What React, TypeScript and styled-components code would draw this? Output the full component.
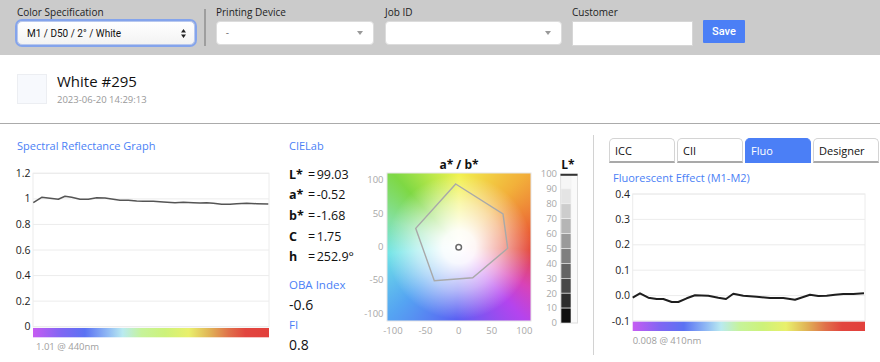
import styled, { createGlobalStyle } from 'styled-components'

const BLUE = '#4b7ff6'

const GlobalStyle = createGlobalStyle`
  html, body { margin: 0; padding: 0; background: #fff; }
  body { font-family: 'Open Sans', 'DejaVu Sans', sans-serif; color: #222; }
  * { box-sizing: border-box; }
`

const Page = styled.div`
  width: 880px;
  height: 362px;
  overflow: hidden;
  background: #fff;
`

const Toolbar = styled.div`
  height: 55px;
  background: #cbcbcb;
  display: flex;
  align-items: flex-start;
  padding: 6px 0 0 17px;
`

const Field = styled.div<{ $w: number; $gap?: number }>`
  display: flex;
  flex-direction: column;
  width: ${p => p.$w}px;
  margin-right: ${p => p.$gap ?? 10}px;
`

const FieldLabel = styled.div`
  font-size: 10px;
  line-height: 13px;
  height: 13px;
  margin-bottom: 2px;
  white-space: nowrap;
  color: #222;
`

const SelectBox = styled.div<{ $focused?: boolean }>`
  height: 24px;
  display: flex;
  align-items: center;
  justify-content: space-between;
  padding: 0 8px 0 9px;
  border-radius: ${p => (p.$focused ? 5 : 4)}px;
  background: ${p => (p.$focused ? 'linear-gradient(#ffffff, #f3f3f3)' : '#fff')};
  border: 1px solid ${p => (p.$focused ? '#b8c8ee' : '#dcdcdc')};
  box-shadow: ${p => (p.$focused ? '0 0 0 2px #84a4ec' : 'none')};
  font-family: Roboto, 'Liberation Sans', sans-serif;
  font-size: 10px;
  font-weight: 400;
  color: #111;
`

const Placeholder = styled.span`
  color: #777;
`

const DownCaret = styled.span`
  width: 0;
  height: 0;
  border-left: 3px solid transparent;
  border-right: 3px solid transparent;
  border-top: 4px solid #999;
  margin-right: 2px;
`

const TextInput = styled.div`
  height: 25px;
  background: #fff;
  border: 1px solid #d6d6d6;
`

const Divider = styled.div`
  width: 2px;
  height: 37px;
  margin: 3px 10px 0 0;
  background: #9e9e9e;
`

const SaveButton = styled.button`
  margin-top: 14px;
  width: 42px;
  height: 23px;
  border: none;
  border-radius: 1px;
  background: ${BLUE};
  color: #fff;
  font-family: Roboto, 'Liberation Sans', sans-serif;
  font-size: 11px;
  font-weight: 500;
  padding: 0;
`

const Header = styled.div`
  height: 69px;
  display: flex;
  align-items: flex-start;
  padding: 19px 17px 0;
  border-bottom: 1px solid #ababab;
`

const Swatch = styled.div`
  width: 30px;
  height: 30px;
  background: #f7f9fd;
  border: 1px solid #eceef2;
`

const Identity = styled.div`
  margin: -2px 0 0 10px;
`

const Name = styled.div`
  font-size: 15px;
  line-height: 18px;
  color: #111;
`

const Stamp = styled.div`
  font-size: 9.5px;
  line-height: 12px;
  margin-top: 3.5px;
  color: #999;
`

const Main = styled.div`
  display: flex;
  padding-top: 11px;
`

const LeftCol = styled.div`
  width: 289px;
  padding: 3px 0 0 17px;
`

const LabCol = styled.div`
  width: 304px;
  padding-top: 3px;
`

const SectionTitle = styled.div<{ $mt?: number; $ml?: number }>`
  font-size: 11px;
  line-height: 15px;
  color: ${BLUE};
  margin: ${p => p.$mt ?? 0}px 0 0 ${p => p.$ml ?? 0}px;
`

const ChartSvg = styled.svg<{ $mt?: number; $ml?: number }>`
  display: block;
  margin: ${p => p.$mt ?? 0}px 0 0 ${p => p.$ml ?? 0}px;
  font-family: 'Open Sans', 'DejaVu Sans', sans-serif;
  overflow: visible;
`

const LabRow = styled.div`
  display: flex;
`

const Values = styled.div`
  width: 71px;
  padding-top: 11.6px;
`

const ValueRow = styled.div`
  display: flex;
  font-size: 12.5px;
  line-height: 20.7px;
  color: #111;
  white-space: nowrap;
`

const ValueKey = styled.span`
  width: 19px;
  font-weight: 700;
`

const Eq = styled.span`
  margin-right: 1.5px;
`

const SubTitle = styled.div<{ $mt?: number }>`
  font-size: 11.5px;
  line-height: 20px;
  color: ${BLUE};
  margin-top: ${p => p.$mt ?? 0}px;
`

const BigValue = styled.div`
  font-size: 14px;
  line-height: 20px;
  color: #111;
`

const ColorField = styled.div`
  width: 100%;
  height: 100%;
  background:
    radial-gradient(circle at 50% 50%, #fff 0%, rgba(255, 255, 255, 0.95) 16%, rgba(255, 255, 255, 0.55) 42%, rgba(255, 255, 255, 0) 70%),
    conic-gradient(from 0deg, #f2f24e 0deg, #f2b03a 42deg, #ea6034 78deg, #e44a3a 92deg, #d843b8 120deg, #b444ee 138deg, #5a60f2 182deg, #55a4f2 225deg, #70e4e6 265deg, #84e0a0 292deg, #7ed844 318deg, #bce84a 340deg, #f2f24e 360deg);
`

const RightPanel = styled.div`
  flex: 1;
  border-left: 1px solid #d2d2d2;
  padding: 3px 0 0 15px;
`

const Tabs = styled.div`
  display: flex;
  gap: 2px;
`

const Tab = styled.div<{ $active?: boolean }>`
  width: 66px;
  height: 25px;
  padding-left: 5px;
  font-size: 11px;
  line-height: 23px;
  border: 1px solid ${p => (p.$active ? BLUE : '#d4d4d4')};
  border-bottom: 2px solid ${p => (p.$active ? BLUE : '#a9a9a9')};
  border-radius: 5px 5px 0 0;
  background: ${p => (p.$active ? BLUE : '#fff')};
  color: ${p => (p.$active ? '#fff' : '#111')};
`

function UpDown() {
  return (
    <svg width="5" height="9" viewBox="0 0 5 9">
      <path d="M0 3.4 L2.5 0 L5 3.4 Z M0 5.6 L2.5 9 L5 5.6 Z" fill="#222" />
    </svg>
  )
}

function Spectrum({ id }: { id: string }) {
  return (
    <linearGradient id={id} x1="0" x2="1" y1="0" y2="0">
      <stop offset="0" stopColor="#c65cf2" />
      <stop offset="0.12" stopColor="#7f66f3" />
      <stop offset="0.22" stopColor="#5b72f3" />
      <stop offset="0.32" stopColor="#92bcf4" />
      <stop offset="0.38" stopColor="#b9eaf0" />
      <stop offset="0.46" stopColor="#c6f39a" />
      <stop offset="0.56" stopColor="#cdf27a" />
      <stop offset="0.66" stopColor="#e9f06c" />
      <stop offset="0.75" stopColor="#e0b256" />
      <stop offset="0.83" stopColor="#e0704a" />
      <stop offset="0.9" stopColor="#e2463f" />
      <stop offset="1" stopColor="#e2403c" />
    </linearGradient>
  )
}

const reflectance = '19.3,40.7 27.7,35.3 36,36.3 44.3,37.3 51,34.3 57.7,35.3 66,37.3 74.3,37.3 82.7,35.7 91,36 99.3,37.3 106,38.3 114.3,38.3 122.7,39 129.3,39.3 139.3,39.3 149.3,40 161,40.7 169.3,40.3 179.3,40.7 186,41 192.7,40.7 199.3,41.3 207.7,42.3 216,42.3 222.7,41.7 232.7,41.3 242.7,41.7 254.3,42'

const fluo = '29.7,112.7 37,108.3 45.3,112.7 53.7,114 60.3,114 68.7,117 75.3,117 83.7,113.3 92,110.3 105.3,110.7 115.3,112.7 123,114 130.3,108.7 140.3,110.7 153.7,111.7 167,113 180.3,113 192,114.7 200.3,112 207,109.7 215.3,111 223.7,110.7 232,109.7 240.3,109 250.3,109 261,108.3'

function SpectralChart() {
  const ticks = ['1.2', '1', '0.8', '0.6', '0.4', '0.2', '0']
  const top = 11.3
  const step = 25.57
  return (
    <ChartSvg width="262" height="192" $mt={9} $ml={-3}>
      <defs><Spectrum id="specA" /></defs>
      <rect x="19" y={top} width="236" height={step * 6} fill="none" stroke="#ececec" />
      {ticks.map((t, i) => (
        <g key={t}>
          <line x1="19" x2="255" y1={top + i * step} y2={top + i * step} stroke="#ececec" />
          <text x="16.5" y={top + i * step + 3.6} fontSize="10.5" textAnchor="end" fill="#222">{t}</text>
        </g>
      ))}
      <polyline points={reflectance} fill="none" stroke="#555" strokeWidth="1.5" strokeLinejoin="round" />
      <rect x="19" y="166" width="236" height="9.3" fill="url(#specA)" />
      <text x="22" y="188" fontSize="9.5" fill="#a0a0a0">1.01 @ 440nm</text>
    </ChartSvg>
  )
}

function AbChart() {
  const yTicks: [string, number][] = [['100', 24.3], ['50', 58.3], ['0', 91.7], ['-50', 125], ['-100', 159]]
  const xTicks: [string, number][] = [['-100', 33], ['-50', 65.5], ['0', 98.7], ['50', 131.7], ['100', 164.3]]
  const bands = ['#f6f6f6', '#e4e4e4', '#cdcdcd', '#b5b5b5', '#9a9a9a', '#7f7f7f', '#646464', '#484848', '#2d2d2d', '#0e0e0e']
  const lLabels = [100, 90, 80, 70, 60, 50, 40, 30, 20, 10, 0]
  return (
    <ChartSvg width="233" height="185" $mt={2}>
      <text x="99" y="13.5" fontSize="12" fontWeight="700" textAnchor="middle" fill="#111">a* / b*</text>
      <foreignObject x="27" y="18" width="144" height="148">
        <ColorField />
      </foreignObject>
      <rect x="27" y="18" width="144" height="148" fill="none" stroke="#e6e6e6" />
      <polygon points="95.7,29 143,59 147.7,93.3 112.7,122.7 74.3,125.7 55.7,73.3" fill="none" stroke="#a9a9a9" strokeWidth="1.4" />
      <circle cx="98.7" cy="92.3" r="2.8" fill="#fff" stroke="#6a6a6a" strokeWidth="1.5" />
      {yTicks.map(([t, y]) => (
        <text key={t} x="23.5" y={y + 3.3} fontSize="9.5" textAnchor="end" fill="#a8a8a8">{t}</text>
      ))}
      {xTicks.map(([t, x]) => (
        <text key={t} x={x} y="178.5" fontSize="9.5" textAnchor="middle" fill="#a8a8a8">{t}</text>
      ))}

      <text x="208" y="13.5" fontSize="12" fontWeight="700" textAnchor="middle" fill="#111">L*</text>
      <rect x="200.5" y="19" width="17" height="149" fill="#fafafa" stroke="#dedede" />
      {bands.map((c, i) => (
        <rect key={c} x="201" y={19 + i * 14.9} width="10" height="14.9" fill={c} stroke="#f2f2f2" strokeWidth="0.6" />
      ))}
      <line x1="200.5" x2="217.5" y1="19.8" y2="19.8" stroke="#333" strokeWidth="2" />
      {lLabels.map((v, i) => (
        <text key={v} x="197" y={19 + i * 14.9 + 3.3} fontSize="9.5" textAnchor="end" fill="#a8a8a8">{v}</text>
      ))}
    </ChartSvg>
  )
}

function FluoChart() {
  const ticks = ['0.4', '0.3', '0.2', '0.1', '0.0', '-0.1']
  const top = 9
  const step = 25.4
  return (
    <ChartSvg width="270" height="162" $ml={-6}>
      <defs><Spectrum id="specB" /></defs>
      <rect x="29.7" y={top} width="232.3" height={step * 5} fill="none" stroke="#ececec" />
      {ticks.map((t, i) => (
        <g key={t}>
          <line x1="29.7" x2="262" y1={top + i * step} y2={top + i * step} stroke="#ececec" />
          <text x="27" y={top + i * step + 3.6} fontSize="10.5" textAnchor="end" fill="#222">{t}</text>
        </g>
      ))}
      <polyline points={fluo} fill="none" stroke="#1e1e1e" strokeWidth="2" strokeLinejoin="round" />
      <rect x="29.7" y="136.7" width="232.3" height="9.3" fill="url(#specB)" />
      <text x="29.7" y="158.5" fontSize="9.5" fill="#a0a0a0">0.008 @ 410nm</text>
    </ChartSvg>
  )
}

const labValues: [string, string][] = [
  ['L*', '99.03'],
  ['a*', '-0.52'],
  ['b*', '-1.68'],
  ['C', '1.75'],
  ['h', '252.9°'],
]

export default function App() {
  return (
    <Page>
      <GlobalStyle />
      <Toolbar>
        <Field $w={178} $gap={9}>
          <FieldLabel>Color Specification</FieldLabel>
          <SelectBox $focused>
            <span>M1 / D50 / 2° / White</span>
            <UpDown />
          </SelectBox>
        </Field>
        <Divider />
        <Field $w={158} $gap={11}>
          <FieldLabel>Printing Device</FieldLabel>
          <SelectBox>
            <Placeholder>-</Placeholder>
            <DownCaret />
          </SelectBox>
        </Field>
        <Field $w={177}>
          <FieldLabel>Job ID</FieldLabel>
          <SelectBox>
            <span />
            <DownCaret />
          </SelectBox>
        </Field>
        <Field $w={121}>
          <FieldLabel>Customer</FieldLabel>
          <TextInput />
        </Field>
        <SaveButton>Save</SaveButton>
      </Toolbar>

      <Header>
        <Swatch />
        <Identity>
          <Name>White #295</Name>
          <Stamp>2023-06-20 14:29:13</Stamp>
        </Identity>
      </Header>

      <Main>
        <LeftCol>
          <SectionTitle>Spectral Reflectance Graph</SectionTitle>
          <SpectralChart />
        </LeftCol>

        <LabCol>
          <SectionTitle>CIELab</SectionTitle>
          <LabRow>
            <Values>
              {labValues.map(([k, v]) => (
                <ValueRow key={k}>
                  <ValueKey>{k}</ValueKey>
                  <Eq>=</Eq>
                  <span>{v}</span>
                </ValueRow>
              ))}
              <SubTitle $mt={6.9}>OBA Index</SubTitle>
              <BigValue>-0.6</BigValue>
              <SubTitle>FI</SubTitle>
              <BigValue>0.8</BigValue>
            </Values>
            <AbChart />
          </LabRow>
        </LabCol>

        <RightPanel>
          <Tabs>
            <Tab>ICC</Tab>
            <Tab>CII</Tab>
            <Tab $active>Fluo</Tab>
            <Tab>Designer</Tab>
          </Tabs>
          <SectionTitle $mt={7} $ml={4}>Fluorescent Effect (M1-M2)</SectionTitle>
          <FluoChart />
        </RightPanel>
      </Main>
    </Page>
  )
}
